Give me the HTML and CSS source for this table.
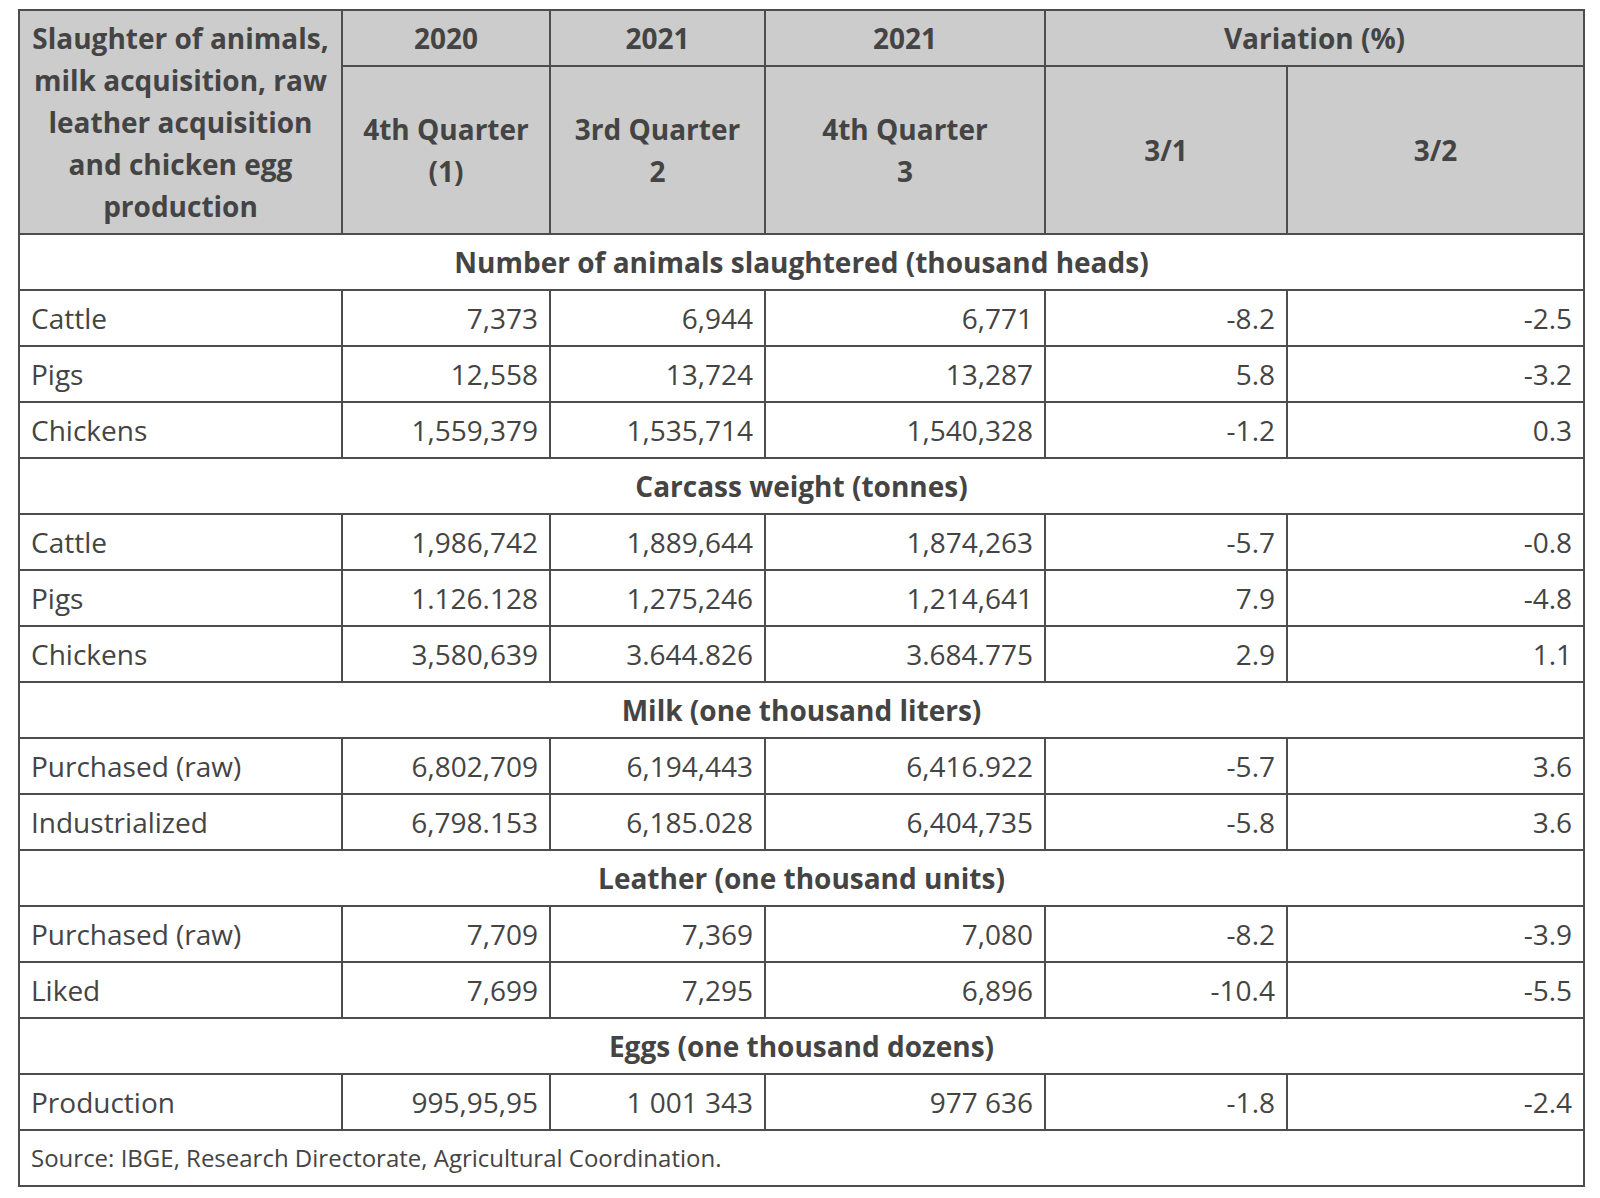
FILE: index.html
```html
<!DOCTYPE html>
<html>
<head>
<meta charset="utf-8">
<link rel="stylesheet" href="styles.css">
</head>
<body>
<div class="wrap">
<table class="stats">
  <colgroup>
    <col class="c1"><col class="c2"><col class="c3"><col class="c4"><col class="c5"><col class="c6">
  </colgroup>
  <thead>
    <tr class="top">
      <th rowspan="2" class="title">Slaughter of animals, milk acquisition, raw leather acquisition and chicken egg production</th>
      <th>2020</th>
      <th>2021</th>
      <th>2021</th>
      <th colspan="2">Variation (%)</th>
    </tr>
    <tr class="sub">
      <th>4th Quarter<br>(1)</th>
      <th>3rd Quarter<br>2</th>
      <th>4th Quarter<br>3</th>
      <th>3/1</th>
      <th>3/2</th>
    </tr>
  </thead>
  <tbody>
    <tr><td colspan="6" class="section">Number of animals slaughtered (thousand heads)</td></tr>
    <tr><td>Cattle</td><td class="n">7,373</td><td class="n">6,944</td><td class="n">6,771</td><td class="n">-8.2</td><td class="n">-2.5</td></tr>
    <tr><td>Pigs</td><td class="n">12,558</td><td class="n">13,724</td><td class="n">13,287</td><td class="n">5.8</td><td class="n">-3.2</td></tr>
    <tr><td>Chickens</td><td class="n">1,559,379</td><td class="n">1,535,714</td><td class="n">1,540,328</td><td class="n">-1.2</td><td class="n">0.3</td></tr>
    <tr><td colspan="6" class="section">Carcass weight (tonnes)</td></tr>
    <tr><td>Cattle</td><td class="n">1,986,742</td><td class="n">1,889,644</td><td class="n">1,874,263</td><td class="n">-5.7</td><td class="n">-0.8</td></tr>
    <tr><td>Pigs</td><td class="n">1.126.128</td><td class="n">1,275,246</td><td class="n">1,214,641</td><td class="n">7.9</td><td class="n">-4.8</td></tr>
    <tr><td>Chickens</td><td class="n">3,580,639</td><td class="n">3.644.826</td><td class="n">3.684.775</td><td class="n">2.9</td><td class="n">1.1</td></tr>
    <tr><td colspan="6" class="section">Milk (one thousand liters)</td></tr>
    <tr><td>Purchased (raw)</td><td class="n">6,802,709</td><td class="n">6,194,443</td><td class="n">6,416.922</td><td class="n">-5.7</td><td class="n">3.6</td></tr>
    <tr><td>Industrialized</td><td class="n">6,798.153</td><td class="n">6,185.028</td><td class="n">6,404,735</td><td class="n">-5.8</td><td class="n">3.6</td></tr>
    <tr><td colspan="6" class="section">Leather (one thousand units)</td></tr>
    <tr><td>Purchased (raw)</td><td class="n">7,709</td><td class="n">7,369</td><td class="n">7,080</td><td class="n">-8.2</td><td class="n">-3.9</td></tr>
    <tr><td>Liked</td><td class="n">7,699</td><td class="n">7,295</td><td class="n">6,896</td><td class="n">-10.4</td><td class="n">-5.5</td></tr>
    <tr><td colspan="6" class="section">Eggs (one thousand dozens)</td></tr>
    <tr><td>Production</td><td class="n">995,95,95</td><td class="n">1 001 343</td><td class="n">977 636</td><td class="n">-1.8</td><td class="n">-2.4</td></tr>
  </tbody>
  <tfoot>
    <tr><td colspan="6" class="source">Source: IBGE, Research Directorate, Agricultural Coordination.</td></tr>
  </tfoot>
</table>
</div>
</body>
</html>
```
FILE: styles.css
```css
html, body {
  margin: 0;
  padding: 0;
  background: #ffffff;
}
.wrap {
  padding: 9px 0 0 18px;
}
.stats {
  border-collapse: collapse;
  table-layout: fixed;
  width: 1565px;
  font-family: "Open Sans", "Liberation Sans", sans-serif;
  font-size: 28px;
  line-height: 42px;
  color: #444444;
}
.c1 { width: 323px; }
.c2 { width: 208px; }
.c3 { width: 215px; }
.c4 { width: 280px; }
.c5 { width: 242px; }
.c6 { width: 297px; }
.stats th,
.stats td {
  border: 2px solid #4d4d4d;
  padding: 6px 11px;
}
.stats th {
  background: #cccccc;
  font-weight: 700;
  text-align: center;
  vertical-align: middle;
}
.stats tr.top {
  height: 55px;
}
.stats tr.sub {
  height: 168px;
}
.stats td {
  text-align: left;
}
.stats td.n {
  text-align: right;
}
.stats td.section {
  text-align: center;
  font-weight: 700;
}
.stats td.source {
  font-size: 24px;
}
```
